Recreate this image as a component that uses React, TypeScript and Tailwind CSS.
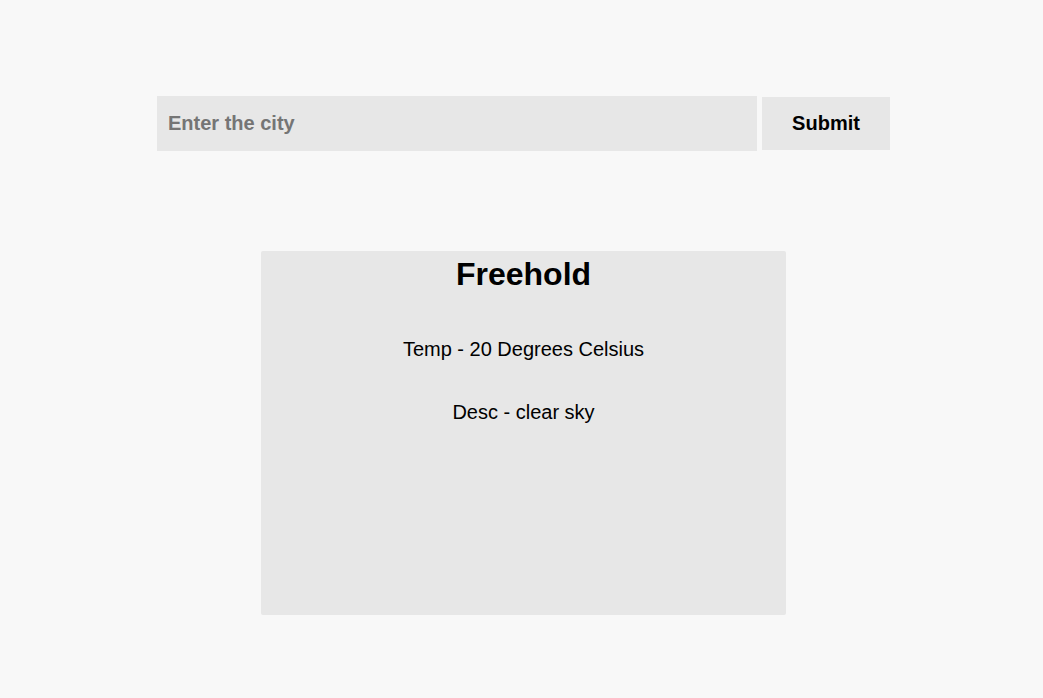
export default function App() {
  return (
    <div
      className="min-h-[698px] w-full bg-[#f8f8f8] pl-[4px] text-black"
      style={{ fontFamily: '"Liberation Sans", Arial, sans-serif' }}
    >
      <div className="flex justify-center pt-[96px]">
        <form className="flex items-center gap-[5px]" onSubmit={(e) => e.preventDefault()}>
          <input
            type="text"
            placeholder="Enter the city"
            className="h-[55px] w-[600px] bg-[#e7e7e7] pl-[11px] text-[20px] font-bold outline-none placeholder:text-[#757575]"
          />
          <button
            type="submit"
            className="h-[53px] w-[128px] bg-[#e7e7e7] pb-[2px] text-[20px] font-bold"
          >
            Submit
          </button>
        </form>
      </div>

      <div className="mt-[100px] flex justify-center">
        <div className="h-[364px] w-[525px] rounded-[2px] bg-[#e7e7e7] pt-[5px] text-center">
          <h1 className="text-[32px] font-bold leading-[37px]">Freehold</h1>
          <p className="mt-[45px] text-[20px] leading-[23px]">Temp - 20 Degrees Celsius</p>
          <p className="mt-[40px] text-[20px] leading-[23px]">Desc - clear sky</p>
        </div>
      </div>
    </div>
  )
}
